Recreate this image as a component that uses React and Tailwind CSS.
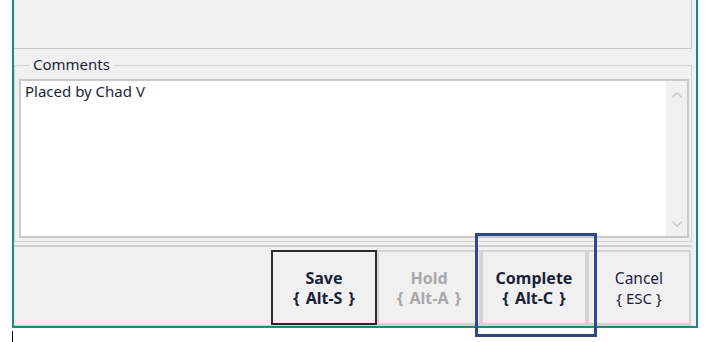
import { ChevronUp, ChevronDown } from 'lucide-react';

const font = { fontFamily: '"Noto Sans", "Open Sans", sans-serif' };

function ActionButton({ title, hotkey, bold, disabled, outlined }) {
    const color = disabled ? 'text-[#a8a8ab]' : 'text-[#1c1f3a]';
    return (
        <div
            className={`h-[75px] flex flex-col items-center justify-center leading-[20px] bg-[#f0f0f0] border-2 ${outlined ? 'border-[#2b2b2b]' : 'border-[#d3d3d3]'} ${color}`}
        >
            <span className={bold ? 'text-[16px] font-bold' : 'text-[15.5px]'}>{title}</span>
            <span className={bold ? 'text-[16px] font-bold [word-spacing:2px]' : 'text-[15px]'}>{hotkey}</span>
        </div>
    );
}

export default function App() {
    return (
        <div className="relative w-[707px] h-[342px] bg-white overflow-hidden" style={font}>
            {/* dialog window */}
            <div className="ml-[12px] w-[686px] h-[328px] bg-[#f0f0f0] border-x-2 border-b-2 border-[#1f8a7c] flex flex-col">
                {/* upper panel, cut off at top */}
                <div className="h-[50px] mr-[4px] border-r border-b border-[#c8c8c8]"></div>

                {/* Comments group box */}
                <div className="relative mt-[16px] mr-[4px] border border-[#d2d2d2] pt-[13px] pl-[4px] pr-[2px] pb-[3px]">
                    <span className="absolute -top-[12px] left-[14px] px-[4px] bg-[#f0f0f0] text-[15px] leading-[20px] text-[#1c1f3a]">
                        Comments
                    </span>
                    <div className="h-[159px] bg-white border-2 border-[#c9c9c9] flex">
                        <div className="flex-1 pl-[4px] text-[15px] leading-[20px] text-[#1c1f3a]">
                            Placed by Chad V
                        </div>
                        <div className="w-[21px] bg-[#f0f0f0] flex flex-col items-center justify-between pt-[5px] pb-[3px] text-[#c4c4c4]">
                            <ChevronUp size={18} strokeWidth={1.5} />
                            <ChevronDown size={18} strokeWidth={1.5} />
                        </div>
                    </div>
                </div>

                {/* button bar */}
                <div className="flex-1 mt-[3px] mr-[4px] border-t-2 border-b border-[#d0d0d0] flex justify-end items-start pt-[3px] pr-px">
                    <div className="grid grid-cols-[106px_104px_106px_104px]">
                        <ActionButton title="Save" hotkey="{ Alt-S }" bold outlined />
                        <ActionButton title="Hold" hotkey="{ Alt-A }" bold disabled />
                        <ActionButton title="Complete" hotkey="{ Alt-C }" bold />
                        <ActionButton title="Cancel" hotkey="{ ESC }" />
                    </div>
                </div>
            </div>

            {/* text cursor below window */}
            <div className="ml-[12px] mt-[3px] w-px h-[11px] bg-black"></div>

            {/* highlight annotation around Complete */}
            <div className="absolute left-[475px] top-[233px] w-[122px] h-[104px] border-[3px] border-[#2e4a86]"></div>
        </div>
    );
}
